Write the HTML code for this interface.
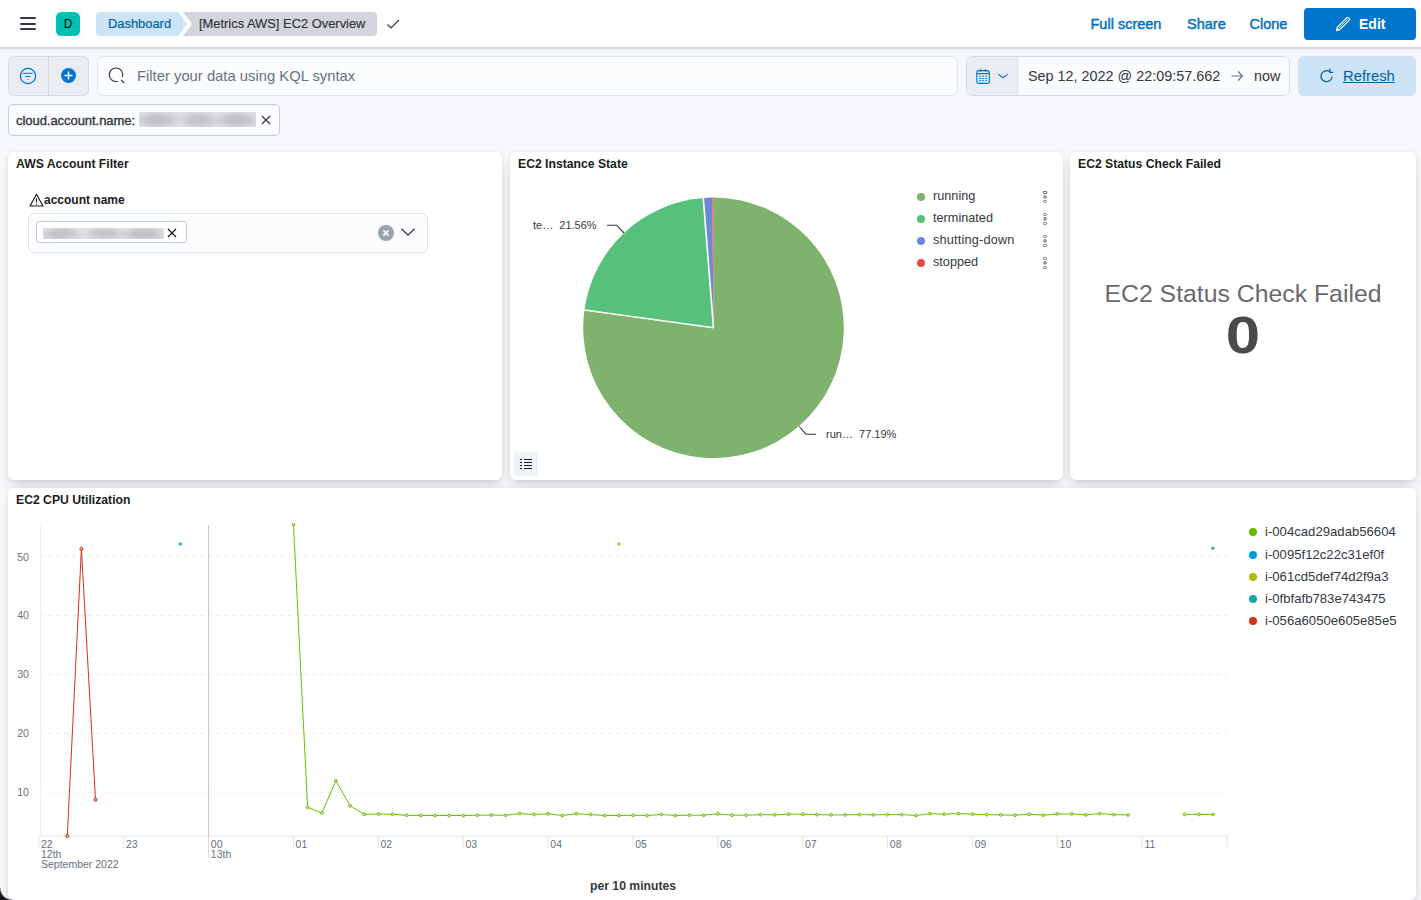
<!DOCTYPE html>
<html><head><meta charset="utf-8">
<style>
*{box-sizing:border-box;margin:0;padding:0}
html,body{width:1421px;height:900px;overflow:hidden;background:#F7F8FC;font-family:"Liberation Sans",sans-serif;color:#343741}
.a{position:absolute}
.nw{white-space:nowrap}
#hdr{left:0;top:0;width:1421px;height:48px;background:#fff;border-bottom:1px solid #CDD2DE;box-shadow:0 1px 1px rgba(0,0,0,0.07),0 2px 5px rgba(0,0,0,0.07)}
.ham{left:20px;width:16px;height:2px;background:#343741;border-radius:1px}
.tlink{color:#0071C2;font-weight:400;font-size:14.5px;top:16px;line-height:16px;-webkit-text-stroke:0.45px #0071C2}
.panel{background:#fff;border-radius:6px;box-shadow:0 0.9px 4px -1px rgba(0,0,0,0.08),0 2.6px 8px -1px rgba(0,0,0,0.06),0 5.7px 12px -1px rgba(0,0,0,0.05),0 15px 15px -1px rgba(0,0,0,0.04)}
.ptitle{left:8px;top:5px;font-size:12.2px;font-weight:700;color:#1A1C21;line-height:14px}
.ylab{left:0;width:29px;text-align:right;font-size:10.6px;line-height:14px;color:#69707D}
.xlab{font-size:10.5px;line-height:11px;color:#69707D}
</style></head><body>
<!-- header -->
<div id="hdr" class="a">
  <div class="a ham" style="top:17px"></div>
  <div class="a ham" style="top:22.5px"></div>
  <div class="a ham" style="top:28px"></div>
  <div id="avatar" class="a" style="left:56px;top:12px;width:24px;height:24px;background:#00BFB3;border-radius:5.5px;font-size:12px;line-height:24px;text-align:center;color:#000">D</div>
  <svg class="a" style="left:96px;top:12px" width="310" height="24" viewBox="0 0 310 24">
    <path d="M4 0H82L91 12L82 24H4A4 4 0 0 1 0 20V4A4 4 0 0 1 4 0Z" fill="#CCE4F5"/>
    <path d="M87 0H277A4 4 0 0 1 281 4V20A4 4 0 0 1 277 24H87L96 12Z" fill="#D3D5DA"/>
    <path d="M291.5 12.5L295 16L303 8" fill="none" stroke="#343741" stroke-width="1.2"/>
  </svg>
  <div id="bc1" class="a nw" style="left:108px;top:16px;font-size:12.9px;line-height:16px;color:#0061A6;-webkit-text-stroke:0.2px #0061A6">Dashboard</div>
  <div id="bc2" class="a nw" style="left:199px;top:16px;font-size:12.9px;line-height:16px;color:#343741;-webkit-text-stroke:0.2px #343741">[Metrics AWS] EC2 Overview</div>
  <div id="fs" class="a nw tlink" style="left:1090.5px">Full screen</div>
  <div id="sh" class="a nw tlink" style="left:1187px">Share</div>
  <div id="cl" class="a nw tlink" style="left:1249.5px">Clone</div>
  <div class="a" style="left:1304px;top:8px;width:112px;height:32px;background:#0077CC;border-radius:4px"></div>
  <svg class="a" style="left:1335px;top:16px" width="16" height="16" viewBox="0 0 16 16"><path d="M1.3 14.7L2.3 11.2L11.9 1.6A0.9 0.9 0 0 1 13.2 1.6L14.4 2.8A0.9 0.9 0 0 1 14.4 4.1L4.8 13.7Z" fill="none" stroke="#fff" stroke-width="1.1" stroke-linejoin="round"/><path d="M3.8 12.2L12.6 3.4" stroke="#fff" stroke-width="1"/><path d="M1.1 14.9L1.9 11.8L4.2 14.1Z" fill="#fff"/></svg>
  <div id="edit" class="a nw" style="left:1359px;top:16px;font-size:14px;line-height:16px;font-weight:700;color:#fff">Edit</div>
</div>

<!-- query bar -->
<div class="a" style="left:8px;top:56px;width:81px;height:40px;background:#E9EDF3;border:1px solid #D3DAE6;border-radius:6px"></div>
<div class="a" style="left:48px;top:57px;width:1px;height:38px;background:#D3DAE6"></div>
<svg class="a" style="left:19px;top:67px" width="18" height="18" viewBox="0 0 18 18"><circle cx="9" cy="9" r="7.6" fill="none" stroke="#0077CC" stroke-width="1.3"/><path d="M3.8 6.3H13.8M6.2 9.5H11.3M8.4 12.4H9.6" stroke="#0077CC" stroke-width="1"/></svg>
<svg class="a" style="left:60px;top:67px" width="17" height="17" viewBox="0 0 17 17"><circle cx="8.5" cy="8.5" r="7.5" fill="#0077CC"/><path d="M8.5 4.5V12.5M4.5 8.5H12.5" stroke="#fff" stroke-width="1.4"/></svg>
<div class="a" style="left:97px;top:56px;width:861px;height:40px;background:#FBFCFD;border:1px solid #DFE3EC;border-radius:6px"></div>
<svg class="a" style="left:108px;top:67px" width="18" height="18" viewBox="0 0 18 18"><path d="M14.34 10.06A6.75 6.75 0 1 0 9.75 14.27" fill="none" stroke="#343741" stroke-width="1.1"/><path d="M13.2 13L16.4 16.2" stroke="#343741" stroke-width="1.1"/></svg>
<div id="kql" class="a nw" style="left:137px;top:68px;font-size:14.8px;line-height:17px;color:#69707D">Filter your data using KQL syntax</div>
<div class="a" style="left:966px;top:56px;width:324px;height:40px;background:#FBFCFD;border:1px solid #D3DAE6;border-radius:6px;overflow:hidden"><div class="a" style="left:0;top:0;width:52px;height:38px;background:#E9EDF3"></div></div>
<svg class="a" style="left:975px;top:68px" width="16" height="17" viewBox="0 0 16 17"><rect x="1.8" y="2.6" width="12.5" height="12.8" rx="2.2" fill="none" stroke="#0077CC" stroke-width="1.1"/><path d="M1.8 5.6H14.3M5.5 1V3.8M10.5 1V3.8" stroke="#0077CC" stroke-width="1.1"/><path d="M4 8.3H5.9" stroke="#0077CC" stroke-width="0.95"/><path d="M7.1 8.3H9" stroke="#0077CC" stroke-width="0.95"/><path d="M10.1 8.3H12" stroke="#0077CC" stroke-width="0.95"/><path d="M4 10.5H5.9" stroke="#0077CC" stroke-width="0.95"/><path d="M7.1 10.5H9" stroke="#0077CC" stroke-width="0.95"/><path d="M10.1 10.5H12" stroke="#0077CC" stroke-width="0.95"/><path d="M4 12.6H5.9" stroke="#0077CC" stroke-width="0.95"/><path d="M7.1 12.6H9" stroke="#0077CC" stroke-width="0.95"/><path d="M10.1 12.6H12" stroke="#0077CC" stroke-width="0.95"/></svg>
<svg class="a" style="left:996px;top:71px" width="13" height="9" viewBox="0 0 13 9"><path d="M2.2 3.1L7 6.7L11.7 3.1" fill="none" stroke="#0077CC" stroke-width="1.1"/></svg>
<div id="date" class="a nw" style="left:1028px;top:68px;font-size:14.4px;line-height:17px;color:#343741">Sep 12, 2022 @ 22:09:57.662</div>
<svg class="a" style="left:1230px;top:69px" width="14" height="14" viewBox="0 0 14 14"><path d="M1.5 7H12.5M8 2.5L12.5 7L8 11.5" fill="none" stroke="#69707D" stroke-width="1.1"/></svg>
<div id="now" class="a nw" style="left:1254px;top:68px;font-size:14.4px;line-height:17px;color:#343741">now</div>
<div class="a" style="left:1298px;top:56px;width:118px;height:40px;background:#CCE4F5;border-radius:6px"></div>
<svg class="a" style="left:1319px;top:68px" width="16" height="16" viewBox="0 0 16 16"><path d="M13 8.5A5.5 5.5 0 1 1 10.2 3.4" fill="none" stroke="#0061A6" stroke-width="1.3"/><path d="M10.8 0.8V4.4H14.2" fill="none" stroke="#0061A6" stroke-width="1.3"/></svg>
<div id="refresh" class="a nw" style="left:1343px;top:68px;font-size:14.8px;line-height:17px;color:#0061A6;text-decoration:underline">Refresh</div>
<!-- filter pill -->
<div class="a" style="left:8px;top:104px;width:272px;height:32px;background:#FBFCFD;border:1px solid #C5CCD8;border-radius:5px"></div>
<div id="cloud" class="a nw" style="left:16px;top:112.5px;font-size:13px;line-height:15px;font-weight:400;color:#343741;-webkit-text-stroke:0.35px #343741;letter-spacing:-0.05px">cloud.account.name:</div>
<div class="a" style="left:139px;top:112px;width:117px;height:15px;background:radial-gradient(ellipse 24px 9px at 19px 8px,#C2C3C7 35%,rgba(194,195,199,0) 100%),radial-gradient(ellipse 22px 9px at 60px 8px,#C4C5C9 35%,rgba(196,197,201,0) 100%),radial-gradient(ellipse 24px 9px at 98px 8px,#C1C2C6 35%,rgba(193,194,198,0) 100%),#DDDEE1"></div>
<svg class="a" style="left:261px;top:115px" width="10" height="10" viewBox="0 0 10 10"><path d="M1 1L9 9M9 1L1 9" stroke="#343741" stroke-width="1.2"/></svg>

<!-- panel 1 -->
<div class="a panel" style="left:8px;top:152px;width:494px;height:328px">
  <div id="t1" class="a nw ptitle">AWS Account Filter</div>
  <svg class="a" style="left:21px;top:41px" width="15" height="14" viewBox="0 0 15 14"><path d="M7.5 1.2L14 13H1Z" fill="none" stroke="#1A1C21" stroke-width="1.2" stroke-linejoin="round"/><path d="M7.5 5.2V9.6M7.5 10.8V11.8" stroke="#1A1C21" stroke-width="1.1"/></svg>
  <div id="acct" class="a nw" style="left:36px;top:41px;font-size:12px;line-height:14px;font-weight:700;color:#1A1C21">account name</div>
  <div class="a" style="left:20px;top:61px;width:400px;height:40px;background:#FBFCFD;border:1px solid #DDE2EB;border-radius:6px"></div>
  <div class="a" style="left:28px;top:69px;width:151px;height:22px;background:#fff;border:1px solid #C4CCDD;border-radius:3px"></div>
  <div class="a" style="left:35px;top:75.5px;width:121px;height:11px;background:radial-gradient(ellipse 23px 8px at 18px 6px,#C4C5C9 35%,rgba(196,197,201,0) 100%),radial-gradient(ellipse 22px 8px at 62px 6px,#C6C7CB 35%,rgba(198,199,203,0) 100%),radial-gradient(ellipse 25px 8px at 100px 6px,#C2C3C7 35%,rgba(194,195,199,0) 100%),#DEDFE2"></div>
  <svg class="a" style="left:159px;top:76px" width="10" height="10" viewBox="0 0 10 10"><path d="M1 1L9 9M9 1L1 9" stroke="#1A1C21" stroke-width="1.2"/></svg>
  <svg class="a" style="left:370px;top:73px" width="16" height="16" viewBox="0 0 16 16"><circle cx="8" cy="8" r="8" fill="#98A2B3"/><path d="M5.4 5.4L10.6 10.6M10.6 5.4L5.4 10.6" stroke="#fff" stroke-width="1.5"/></svg>
  <svg class="a" style="left:392px;top:75px" width="16" height="10" viewBox="0 0 16 10"><path d="M1.5 1.8L8 8.2L14.5 1.8" fill="none" stroke="#343741" stroke-width="1.3"/></svg>
</div>
<!-- panel 2 -->
<div class="a panel" style="left:510px;top:152px;width:553px;height:328px">
  <div id="t2" class="a nw ptitle">EC2 Instance State</div>
</div>
<!-- panel 3 -->
<div class="a panel" style="left:1070px;top:152px;width:346px;height:328px">
  <div id="t3" class="a nw ptitle">EC2 Status Check Failed</div>
  <div id="bigt" class="a nw" style="left:0;width:346px;text-align:center;top:127.6px;font-size:24.8px;line-height:28px;color:#69696B">EC2 Status Check Failed</div>
  <div id="zero" class="a nw" style="left:0;width:346px;text-align:center;top:155px;font-size:51.5px;line-height:56px;font-weight:700;color:#4B4B4D;transform:scaleX(1.2)">0</div>
</div>
<!-- panel 4 -->
<div class="a panel" style="left:8px;top:488px;width:1408px;height:412px">
  <div id="t4" class="a nw ptitle">EC2 CPU Utilization</div>
</div>

<!-- pie overlay -->
<svg class="a" style="left:0;top:0;pointer-events:none" width="1421" height="900" viewBox="0 0 1421 900">
<path d="M713.5 327.8L713.50 197.50A130.3 130.3 0 1 1 584.43 309.93Z" fill="#7EB26D"/>
<path d="M713.5 327.8L584.43 309.93A130.3 130.3 0 0 1 703.28 197.90Z" fill="#57C17B"/>
<path d="M713.5 327.8L703.28 197.90A130.3 130.3 0 0 1 712.27 197.51Z" fill="#6F87D8"/>
<path d="M713.5 327.8L712.27 197.51A130.3 130.3 0 0 1 713.50 197.50Z" fill="#E24D42"/>
<path d="M713.5 327.8L584.43 309.93M713.5 327.8L703.28 197.90" stroke="#fff" stroke-width="1.6"/>
<path d="M607 225.2H616.7L624 233M799.2 426.5L806 434.2H816" fill="none" stroke="#343741" stroke-width="1.1"/>
<g fill="#9A9CA3"><rect x="1043.5" y="191.5" width="3" height="2" rx="0.6" fill="none" stroke="#71747C" stroke-width="1"/></g>
</svg>
<div class="a nw" style="left:533px;top:219px;font-size:11px;line-height:13px;color:#343741">te…&nbsp; 21.56%</div>
<div class="a nw" style="left:826px;top:428px;font-size:11px;line-height:13px;color:#343741">run…&nbsp; 77.19%</div>
<div class="a" style="left:917px;top:193px;width:8px;height:8px;border-radius:4px;background:#7EB26D"></div>
<div class="a" style="left:917px;top:215px;width:8px;height:8px;border-radius:4px;background:#57C17B"></div>
<div class="a" style="left:917px;top:237px;width:8px;height:8px;border-radius:4px;background:#6F87D8"></div>
<div class="a" style="left:917px;top:259px;width:8px;height:8px;border-radius:4px;background:#E24D42"></div>
<div id="lg1" class="a nw" style="left:933px;top:189px;font-size:12.7px;line-height:15px;color:#343741">running</div>
<div id="lg2" class="a nw" style="left:933px;top:211px;font-size:12.7px;line-height:15px;color:#343741">terminated</div>
<div id="lg3" class="a nw" style="left:933px;top:233px;font-size:12.7px;line-height:15px;color:#343741;letter-spacing:0.2px">shutting-down</div>
<div id="lg4" class="a nw" style="left:933px;top:255px;font-size:12.7px;line-height:15px;color:#343741">stopped</div>
<svg class="a" style="left:1042px;top:190px" width="6" height="80" viewBox="0 0 6 80">
<g id="dots3"><rect x="1.5" y="1.5" width="3" height="2" rx="0.8" fill="none" stroke="#6F727A" stroke-width="1"/><circle cx="3" cy="6.9" r="1.8" fill="#8E9198"/><rect x="1.5" y="10.5" width="3" height="2" rx="0.8" fill="none" stroke="#6F727A" stroke-width="1"/></g>
<use href="#dots3" y="22"/><use href="#dots3" y="44"/><use href="#dots3" y="66"/>
</svg>
<div class="a" style="left:514px;top:452px;width:24px;height:24px;background:#EEF2F9;border-radius:4px"></div>
<svg class="a" style="left:518px;top:456px" width="16" height="16" viewBox="0 0 16 16"><path d="M2 3.5H4M2 6.5H4M2 9.5H4M2 12.5H4M6 3.5H14M6 6.5H14M6 9.5H14M6 12.5H14" stroke="#1A1C21" stroke-width="1.1"/></svg>

<!-- chart -->
<svg class="a" style="left:0;top:0;pointer-events:none" width="1421" height="900" viewBox="0 0 1421 900">
<path d="M40 556.5H1227" stroke="#ECEDF0" stroke-width="1" stroke-dasharray="4 4"/>
<path d="M40 615.4H1227" stroke="#ECEDF0" stroke-width="1" stroke-dasharray="4 4"/>
<path d="M40 674.3H1227" stroke="#ECEDF0" stroke-width="1" stroke-dasharray="4 4"/>
<path d="M40 733.2H1227" stroke="#ECEDF0" stroke-width="1" stroke-dasharray="4 4"/>
<path d="M40 792.1H1227" stroke="#ECEDF0" stroke-width="1" stroke-dasharray="4 4"/>
<path d="M40.5 525V836" stroke="#EEF0F3" stroke-width="1"/>
<path d="M40 836.3H1227" stroke="#EAECF0" stroke-width="1.5"/>
<path d="M208.6 525V836" stroke="#C3C5CA" stroke-width="1"/>
<path d="M38.8 836V848" stroke="#E3E5E9" stroke-width="1"/>
<path d="M123.7 836V848" stroke="#E3E5E9" stroke-width="1"/>
<path d="M208.6 836V858" stroke="#D5D8DD" stroke-width="1"/>
<path d="M293.4 836V848" stroke="#E3E5E9" stroke-width="1"/>
<path d="M378.3 836V848" stroke="#E3E5E9" stroke-width="1"/>
<path d="M463.2 836V848" stroke="#E3E5E9" stroke-width="1"/>
<path d="M548.1 836V848" stroke="#E3E5E9" stroke-width="1"/>
<path d="M633.0 836V848" stroke="#E3E5E9" stroke-width="1"/>
<path d="M717.8 836V848" stroke="#E3E5E9" stroke-width="1"/>
<path d="M802.7 836V848" stroke="#E3E5E9" stroke-width="1"/>
<path d="M887.6 836V848" stroke="#E3E5E9" stroke-width="1"/>
<path d="M972.5 836V848" stroke="#E3E5E9" stroke-width="1"/>
<path d="M1057.4 836V848" stroke="#E3E5E9" stroke-width="1"/>
<path d="M1142.2 836V848" stroke="#E3E5E9" stroke-width="1"/>
<path d="M1227.0 836V848" stroke="#E3E5E9" stroke-width="1"/>
<polyline points="67.3,836.0 81.4,548.9 95.5,799.7" fill="none" stroke="#D33115" stroke-width="1"/>
<polyline points="293.5,524.9 307.6,807.2 321.8,813.1 335.9,780.7 350.1,805.8 364.2,814.3 378.4,814.0 392.5,814.3 406.6,815.3 420.8,815.5 434.9,815.5 449.1,815.5 463.2,815.5 477.4,815.3 491.5,815.0 505.7,815.3 519.8,813.5 534.0,814.5 548.1,813.8 562.3,815.5 576.4,813.8 590.6,814.5 604.7,815.5 618.9,815.5 633.0,815.3 647.1,815.5 661.3,814.5 675.4,815.5 689.6,815.2 703.7,815.2 717.9,813.9 732.0,815.2 746.2,815.2 760.3,814.6 774.5,814.9 788.6,814.2 802.8,814.2 816.9,814.6 831.1,814.9 845.2,814.9 859.4,814.6 873.5,814.9 887.6,814.6 901.8,814.6 915.9,815.5 930.1,813.6 944.2,814.2 958.4,813.6 972.5,814.2 986.7,814.6 1000.8,814.9 1015.0,815.2 1029.1,814.2 1043.3,815.2 1057.4,813.9 1071.6,813.9 1085.7,814.9 1099.8,813.6 1114.0,814.6 1128.1,814.9" fill="none" stroke="#68BC00" stroke-width="1"/>
<polyline points="1184.7,814.4 1198.9,814.4 1213.0,814.4" fill="none" stroke="#68BC00" stroke-width="1"/>
<circle cx="67.3" cy="836" r="1.6" fill="#EE9C8F" stroke="#D33115" stroke-width="0.9"/>
<circle cx="81.4" cy="548.9" r="1.6" fill="#EE9C8F" stroke="#D33115" stroke-width="0.9"/>
<circle cx="95.5" cy="799.7" r="1.6" fill="#EE9C8F" stroke="#D33115" stroke-width="0.9"/>
<circle cx="293.5" cy="524.9" r="1.45" fill="#C8E6A6" stroke="#68BC00" stroke-width="0.9"/>
<circle cx="307.6" cy="807.2" r="1.45" fill="#C8E6A6" stroke="#68BC00" stroke-width="0.9"/>
<circle cx="321.8" cy="813.1" r="1.45" fill="#C8E6A6" stroke="#68BC00" stroke-width="0.9"/>
<circle cx="335.9" cy="780.7" r="1.45" fill="#C8E6A6" stroke="#68BC00" stroke-width="0.9"/>
<circle cx="350.1" cy="805.8" r="1.45" fill="#C8E6A6" stroke="#68BC00" stroke-width="0.9"/>
<circle cx="364.2" cy="814.3" r="1.45" fill="#C8E6A6" stroke="#68BC00" stroke-width="0.9"/>
<circle cx="378.4" cy="814.0" r="1.45" fill="#C8E6A6" stroke="#68BC00" stroke-width="0.9"/>
<circle cx="392.5" cy="814.3" r="1.45" fill="#C8E6A6" stroke="#68BC00" stroke-width="0.9"/>
<circle cx="406.6" cy="815.3" r="1.45" fill="#C8E6A6" stroke="#68BC00" stroke-width="0.9"/>
<circle cx="420.8" cy="815.5" r="1.45" fill="#C8E6A6" stroke="#68BC00" stroke-width="0.9"/>
<circle cx="434.9" cy="815.5" r="1.45" fill="#C8E6A6" stroke="#68BC00" stroke-width="0.9"/>
<circle cx="449.1" cy="815.5" r="1.45" fill="#C8E6A6" stroke="#68BC00" stroke-width="0.9"/>
<circle cx="463.2" cy="815.5" r="1.45" fill="#C8E6A6" stroke="#68BC00" stroke-width="0.9"/>
<circle cx="477.4" cy="815.3" r="1.45" fill="#C8E6A6" stroke="#68BC00" stroke-width="0.9"/>
<circle cx="491.5" cy="815.0" r="1.45" fill="#C8E6A6" stroke="#68BC00" stroke-width="0.9"/>
<circle cx="505.7" cy="815.3" r="1.45" fill="#C8E6A6" stroke="#68BC00" stroke-width="0.9"/>
<circle cx="519.8" cy="813.5" r="1.45" fill="#C8E6A6" stroke="#68BC00" stroke-width="0.9"/>
<circle cx="534.0" cy="814.5" r="1.45" fill="#C8E6A6" stroke="#68BC00" stroke-width="0.9"/>
<circle cx="548.1" cy="813.8" r="1.45" fill="#C8E6A6" stroke="#68BC00" stroke-width="0.9"/>
<circle cx="562.3" cy="815.5" r="1.45" fill="#C8E6A6" stroke="#68BC00" stroke-width="0.9"/>
<circle cx="576.4" cy="813.8" r="1.45" fill="#C8E6A6" stroke="#68BC00" stroke-width="0.9"/>
<circle cx="590.6" cy="814.5" r="1.45" fill="#C8E6A6" stroke="#68BC00" stroke-width="0.9"/>
<circle cx="604.7" cy="815.5" r="1.45" fill="#C8E6A6" stroke="#68BC00" stroke-width="0.9"/>
<circle cx="618.9" cy="815.5" r="1.45" fill="#C8E6A6" stroke="#68BC00" stroke-width="0.9"/>
<circle cx="633.0" cy="815.3" r="1.45" fill="#C8E6A6" stroke="#68BC00" stroke-width="0.9"/>
<circle cx="647.1" cy="815.5" r="1.45" fill="#C8E6A6" stroke="#68BC00" stroke-width="0.9"/>
<circle cx="661.3" cy="814.5" r="1.45" fill="#C8E6A6" stroke="#68BC00" stroke-width="0.9"/>
<circle cx="675.4" cy="815.5" r="1.45" fill="#C8E6A6" stroke="#68BC00" stroke-width="0.9"/>
<circle cx="689.6" cy="815.2" r="1.45" fill="#C8E6A6" stroke="#68BC00" stroke-width="0.9"/>
<circle cx="703.7" cy="815.2" r="1.45" fill="#C8E6A6" stroke="#68BC00" stroke-width="0.9"/>
<circle cx="717.9" cy="813.9" r="1.45" fill="#C8E6A6" stroke="#68BC00" stroke-width="0.9"/>
<circle cx="732.0" cy="815.2" r="1.45" fill="#C8E6A6" stroke="#68BC00" stroke-width="0.9"/>
<circle cx="746.2" cy="815.2" r="1.45" fill="#C8E6A6" stroke="#68BC00" stroke-width="0.9"/>
<circle cx="760.3" cy="814.6" r="1.45" fill="#C8E6A6" stroke="#68BC00" stroke-width="0.9"/>
<circle cx="774.5" cy="814.9" r="1.45" fill="#C8E6A6" stroke="#68BC00" stroke-width="0.9"/>
<circle cx="788.6" cy="814.2" r="1.45" fill="#C8E6A6" stroke="#68BC00" stroke-width="0.9"/>
<circle cx="802.8" cy="814.2" r="1.45" fill="#C8E6A6" stroke="#68BC00" stroke-width="0.9"/>
<circle cx="816.9" cy="814.6" r="1.45" fill="#C8E6A6" stroke="#68BC00" stroke-width="0.9"/>
<circle cx="831.1" cy="814.9" r="1.45" fill="#C8E6A6" stroke="#68BC00" stroke-width="0.9"/>
<circle cx="845.2" cy="814.9" r="1.45" fill="#C8E6A6" stroke="#68BC00" stroke-width="0.9"/>
<circle cx="859.4" cy="814.6" r="1.45" fill="#C8E6A6" stroke="#68BC00" stroke-width="0.9"/>
<circle cx="873.5" cy="814.9" r="1.45" fill="#C8E6A6" stroke="#68BC00" stroke-width="0.9"/>
<circle cx="887.6" cy="814.6" r="1.45" fill="#C8E6A6" stroke="#68BC00" stroke-width="0.9"/>
<circle cx="901.8" cy="814.6" r="1.45" fill="#C8E6A6" stroke="#68BC00" stroke-width="0.9"/>
<circle cx="915.9" cy="815.5" r="1.45" fill="#C8E6A6" stroke="#68BC00" stroke-width="0.9"/>
<circle cx="930.1" cy="813.6" r="1.45" fill="#C8E6A6" stroke="#68BC00" stroke-width="0.9"/>
<circle cx="944.2" cy="814.2" r="1.45" fill="#C8E6A6" stroke="#68BC00" stroke-width="0.9"/>
<circle cx="958.4" cy="813.6" r="1.45" fill="#C8E6A6" stroke="#68BC00" stroke-width="0.9"/>
<circle cx="972.5" cy="814.2" r="1.45" fill="#C8E6A6" stroke="#68BC00" stroke-width="0.9"/>
<circle cx="986.7" cy="814.6" r="1.45" fill="#C8E6A6" stroke="#68BC00" stroke-width="0.9"/>
<circle cx="1000.8" cy="814.9" r="1.45" fill="#C8E6A6" stroke="#68BC00" stroke-width="0.9"/>
<circle cx="1015.0" cy="815.2" r="1.45" fill="#C8E6A6" stroke="#68BC00" stroke-width="0.9"/>
<circle cx="1029.1" cy="814.2" r="1.45" fill="#C8E6A6" stroke="#68BC00" stroke-width="0.9"/>
<circle cx="1043.3" cy="815.2" r="1.45" fill="#C8E6A6" stroke="#68BC00" stroke-width="0.9"/>
<circle cx="1057.4" cy="813.9" r="1.45" fill="#C8E6A6" stroke="#68BC00" stroke-width="0.9"/>
<circle cx="1071.6" cy="813.9" r="1.45" fill="#C8E6A6" stroke="#68BC00" stroke-width="0.9"/>
<circle cx="1085.7" cy="814.9" r="1.45" fill="#C8E6A6" stroke="#68BC00" stroke-width="0.9"/>
<circle cx="1099.8" cy="813.6" r="1.45" fill="#C8E6A6" stroke="#68BC00" stroke-width="0.9"/>
<circle cx="1114.0" cy="814.6" r="1.45" fill="#C8E6A6" stroke="#68BC00" stroke-width="0.9"/>
<circle cx="1128.1" cy="814.9" r="1.45" fill="#C8E6A6" stroke="#68BC00" stroke-width="0.9"/>
<circle cx="1184.7" cy="814.4" r="1.45" fill="#C8E6A6" stroke="#68BC00" stroke-width="0.9"/>
<circle cx="1198.9" cy="814.4" r="1.45" fill="#C8E6A6" stroke="#68BC00" stroke-width="0.9"/>
<circle cx="1213.0" cy="814.4" r="1.45" fill="#C8E6A6" stroke="#68BC00" stroke-width="0.9"/>
<circle cx="180.4" cy="544.1" r="1.75" fill="#3AAEE8"/>
<circle cx="618.8" cy="544.1" r="1.75" fill="#C0C82E"/>
<circle cx="1212.8" cy="548.2" r="1.75" fill="#3AB3B3"/>
</svg>
<div class="a nw ylab" style="top:549.5px">50</div>
<div class="a nw ylab" style="top:608.4px">40</div>
<div class="a nw ylab" style="top:667.3px">30</div>
<div class="a nw ylab" style="top:726.2px">20</div>
<div class="a nw ylab" style="top:785.1px">10</div>
<div class="a nw xlab" style="left:41.0px;top:839px">22</div>
<div class="a nw xlab" style="left:125.9px;top:839px">23</div>
<div class="a nw xlab" style="left:210.8px;top:839px">00</div>
<div class="a nw xlab" style="left:295.6px;top:839px">01</div>
<div class="a nw xlab" style="left:380.5px;top:839px">02</div>
<div class="a nw xlab" style="left:465.4px;top:839px">03</div>
<div class="a nw xlab" style="left:550.3px;top:839px">04</div>
<div class="a nw xlab" style="left:635.2px;top:839px">05</div>
<div class="a nw xlab" style="left:720.0px;top:839px">06</div>
<div class="a nw xlab" style="left:804.9px;top:839px">07</div>
<div class="a nw xlab" style="left:889.8px;top:839px">08</div>
<div class="a nw xlab" style="left:974.7px;top:839px">09</div>
<div class="a nw xlab" style="left:1059.6px;top:839px">10</div>
<div class="a nw xlab" style="left:1144.4px;top:839px">11</div>
<div class="a nw xlab" style="left:41px;top:849px">12th</div>
<div class="a nw xlab" style="left:41px;top:859px">September 2022</div>
<div class="a nw xlab" style="left:210.8px;top:849px">13th</div>
<div id="per10" class="a nw" style="left:590px;top:879px;font-size:12.2px;line-height:14px;font-weight:700;color:#343741">per 10 minutes</div>
<div class="a" style="left:1249px;top:528.4px;width:8px;height:8px;border-radius:4px;background:#68BC00"></div>
<div id="cl0" class="a nw" style="left:1265px;top:524.4px;font-size:13.15px;line-height:15px;color:#343741">i-004cad29adab56604</div>
<div class="a" style="left:1249px;top:550.5px;width:8px;height:8px;border-radius:4px;background:#009CE0"></div>
<div id="cl1" class="a nw" style="left:1265px;top:546.5px;font-size:13.15px;line-height:15px;color:#343741">i-0095f12c22c31ef0f</div>
<div class="a" style="left:1249px;top:572.5px;width:8px;height:8px;border-radius:4px;background:#B0BC00"></div>
<div id="cl2" class="a nw" style="left:1265px;top:568.5px;font-size:13.15px;line-height:15px;color:#343741">i-061cd5def74d2f9a3</div>
<div class="a" style="left:1249px;top:594.6px;width:8px;height:8px;border-radius:4px;background:#16A5A5"></div>
<div id="cl3" class="a nw" style="left:1265px;top:590.6px;font-size:13.15px;line-height:15px;color:#343741">i-0fbfafb783e743475</div>
<div class="a" style="left:1249px;top:616.7px;width:8px;height:8px;border-radius:4px;background:#D33115"></div>
<div id="cl4" class="a nw" style="left:1265px;top:612.7px;font-size:13.15px;line-height:15px;color:#343741">i-056a6050e605e85e5</div>
<div class="a" style="left:0;top:888px;width:12px;height:12px;background:radial-gradient(circle at 12px 0,rgba(21,23,28,0) 11px,#15171C 12.5px)"></div>
</body></html>
